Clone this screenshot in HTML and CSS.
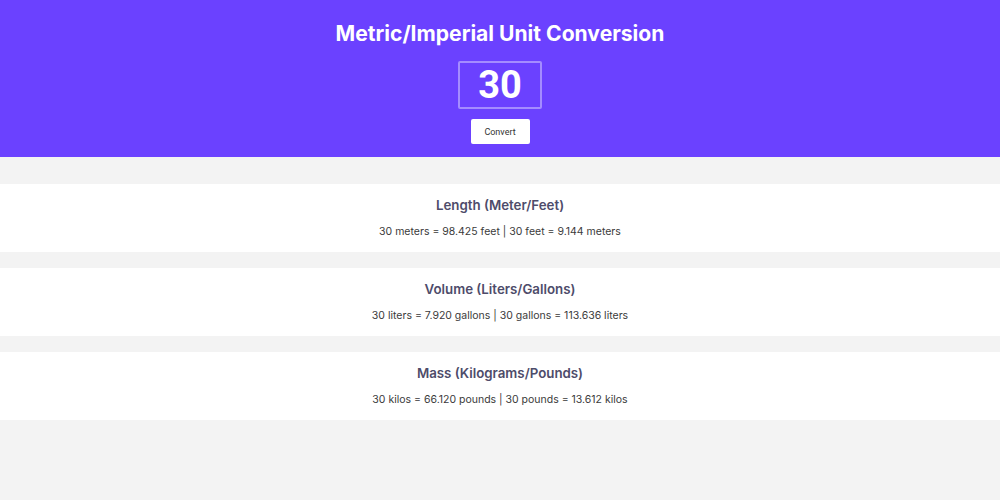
FILE: index.html
```html
<!DOCTYPE html>
<html>
<head>
<meta charset="utf-8">
<link rel="stylesheet" href="styles.css">
</head>
<body>
<header class="hero">
  <h1 class="hero-title">Metric/Imperial Unit Conversion</h1>
  <input class="num-input" type="text" value="30">
  <button class="convert-btn">Convert</button>
</header>
<main class="results">
  <section class="card">
    <h2 class="card-title">Length (Meter/Feet)</h2>
    <p class="card-text">30 meters = 98.425 feet | 30 feet = 9.144 meters</p>
  </section>
  <section class="card">
    <h2 class="card-title">Volume (Liters/Gallons)</h2>
    <p class="card-text">30 liters = 7.920 gallons | 30 gallons = 113.636 liters</p>
  </section>
  <section class="card">
    <h2 class="card-title">Mass (Kilograms/Pounds)</h2>
    <p class="card-text">30 kilos = 66.120 pounds | 30 pounds = 13.612 kilos</p>
  </section>
</main>
</body>
</html>
```
FILE: styles.css
```css
* { box-sizing: border-box; }
body {
  margin: 0;
  background: #f3f3f3;
  font-family: Inter, "Noto Sans", sans-serif;
}
.hero {
  background: #6b41ff;
  height: 157px;
  display: flex;
  flex-direction: column;
  align-items: center;
  padding-top: 20px;
}
.hero-title {
  margin: 0;
  color: #fff;
  font-size: 21.1px;
  font-weight: 700;
  line-height: 27px;
}
.num-input {
  margin-top: 14px;
  width: 84px;
  height: 48px;
  background: transparent;
  border: 2px solid #a48cff;
  border-radius: 2px;
  color: #fff;
  font-family: Roboto, sans-serif;
  font-weight: 700;
  font-size: 38px;
  text-align: center;
  padding: 0;
  outline: none;
}
.convert-btn {
  margin-top: 10px;
  width: 59px;
  height: 25px;
  background: #fff;
  border: none;
  border-radius: 2px;
  color: #333;
  font-family: Roboto, sans-serif;
  font-size: 9px;
  padding: 0;
}
.results {
  padding-top: 27px;
  display: flex;
  flex-direction: column;
  gap: 16px;
}
.card {
  background: #fff;
  height: 68px;
  display: flex;
  flex-direction: column;
  align-items: center;
  padding-top: 13px;
}
.card-title {
  margin: 0;
  font-size: 13.3px;
  font-weight: 600;
  color: #4e4c6a;
  line-height: 16px;
}
.card-text {
  margin: 12px 0 0;
  font-size: 10.5px;
  color: #3a3a3a;
  line-height: 14px;
}
```
